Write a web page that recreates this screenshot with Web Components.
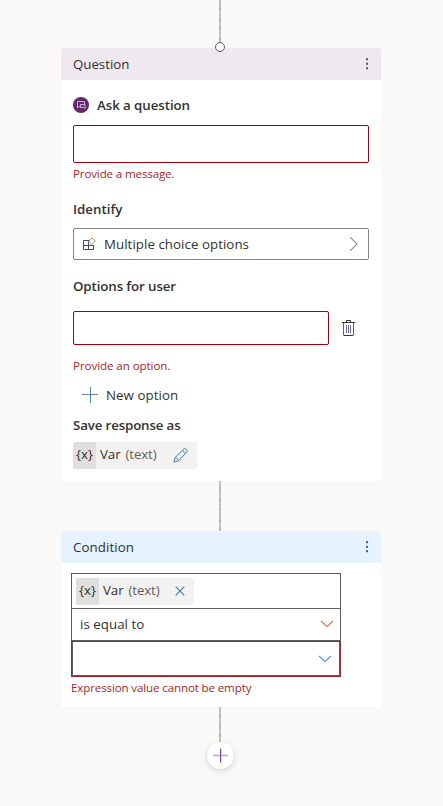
<!DOCTYPE html>
<html lang="en">
<head>
<meta charset="utf-8">
<title>Topic authoring canvas</title>
<style>
html,body{margin:0;height:100%;background:#faf9f8;overflow:hidden}
body{font:13.3px/20px "Open Sans","Noto Sans",sans-serif;color:#323130}
</style>
</head>
<body>
<flow-canvas></flow-canvas>
<script>
const define = (name, html, setup) => customElements.define(name, class extends HTMLElement {
  constructor() {
    super();
    this.attachShadow({mode: 'open'}).innerHTML = html;
  }
  connectedCallback() { if (setup) setup(this); }
});

// A line of text whose tracking is tuned to a given advance width.
define('ui-text', `<style>
  :host{display:block;white-space:pre;height:20px;line-height:20px}
  :host([strong]){font-weight:600}
  :host([error]){color:#a4262c;font-size:11.6px;height:16px;line-height:16px}
  :host([muted]){color:#605e5c}
  span{display:inline-block}
</style><span><slot></slot></span>`, el => {
  const s = el.shadowRoot.querySelector('span');
  const w = +el.getAttribute('fit');
  if (w) s.style.letterSpacing = ((w - s.getBoundingClientRect().width) / el.textContent.length).toFixed(3) + 'px';
});

const icons = {
  more: [4, 14, '<g fill="#5a5654"><rect x="1" y="1.2" width="2" height="2"/><rect x="1" y="5.8" width="2" height="2"/><rect x="1" y="10.2" width="2" height="2"/></g>'],
  ask: [16, 16, '<circle cx="8" cy="8" r="8" fill="#64266c"/><path d="M7.5 9.5H6L4.5 11V4.5h7v3" fill="none" stroke="#d9c0dd" stroke-width=".9"/><path d="M7.5 7.5h4.5v4.2L10.6 10.5H7.5z" fill="#64266c" stroke="#d9c0dd" stroke-width=".9"/>'],
  blocks: [14, 14, '<path d="M6 3.5H1.5v9h10V8M1.5 8.5h10M6.5 3v9.5" fill="none" stroke="#4b4a5c"/><path d="M10 .9l3.3 3.3L10 7.5 6.7 4.2z" fill="#fff" stroke="#b07a52" stroke-width=".9"/>'],
  right: [9, 16, '<path d="M1 1.2L7.6 8 1 14.8" fill="none" stroke="#b97943" stroke-width=".9"/><path d="M1.6 1.2L8.2 8 1.6 14.8" fill="none" stroke="#4688c4" stroke-width=".9"/>'],
  down: [14, 8, '<path d="M1 1l6 5.6L13 1" fill="none" stroke="#c07a48" stroke-width="1.1"/><path d="M7.3 6.6L13.2 1.1" fill="none" stroke="#5c9acb" stroke-width=".4"/>'],
  downBlue: [14, 8, '<path d="M1 1l6 5.6L13 1" fill="none" stroke="#4a91c9" stroke-width="1.1"/><path d="M.8 1.1L6.8 6.7" fill="none" stroke="#c38b60" stroke-width=".4"/>'],
  trash: [13, 17, '<path d="M1.5 3v12.5M11.5 3v12.5" stroke="#53618c"/><path d="M4.5 5v8M6.5 5v8M8.5 5v8" stroke="#6b67a4"/><path d="M0 2.5h13M4.5 2V.5h4V2M2 15.5h9" fill="none" stroke="#323130"/>'],
  plus: [16, 16, '<path d="M0 7.5h16" stroke="#777d96"/><path d="M8.5 0v16" stroke="#4b86bd"/>'],
  pencil: [15, 15, '<path d="M.9 14.1l1.2-4.5L10.6 1.1c2-1.4 4.4 1 3.2 3.1L5.4 12.8zM9.4 2.3l3.3 3.3M2.1 9.6c1.6.1 3 1.5 3.3 3.2" fill="none" stroke="#477b9c"/>'],
  close: [10, 10, '<path d="M.7 .7l8.6 8.6M9.3 .7L.7 9.3" fill="none" stroke="#3d7c9d" stroke-width="1.1"/>'],
  add: [15, 15, '<path d="M0 7.5h15" stroke="#a9b5b8" stroke-width="1.6"/><path d="M7.5 .5v14" stroke="#733a98"/><path d="M8.4 .5v14" stroke="#9dd0e9" stroke-width=".7"/>']
};
define('ui-icon', `<style>:host{display:block;flex:none}svg{display:block}</style><span></span>`, el => {
  const [w, h, art] = icons[el.getAttribute('name')];
  el.shadowRoot.querySelector('span').innerHTML = `<svg width="${w}" height="${h}" viewBox="0 0 ${w} ${h}">${art}</svg>`;
});

define('flow-line', `<style>
  :host{display:block;width:2px;margin-left:219px;
    background:repeating-linear-gradient(#c0bfbe 0 8px,#a9a8a7 8px 9px,#c0bfbe 9px 19px,#a9a8a7 19px 20px)}
</style>`);

define('flow-card', `<style>
  :host{display:flex;flex-direction:column;box-sizing:border-box;width:320px;margin-left:61px;background:#fff;border-radius:2px;overflow:hidden}
  header{display:flex;align-items:center;justify-content:space-between;height:32px;padding:0 12px;box-sizing:border-box;background:var(--tone)}
</style><header><slot name="title"></slot><ui-icon name="more"></ui-icon></header><slot></slot>`);

define('text-box', `<style>
  :host{display:flex;align-items:center;box-sizing:border-box;border:1px solid #a4000c;border-radius:2px;background:#fff}
  :host([picker]){border-color:#858482;padding:0 10px 0 8px}
</style><slot></slot>`);

define('variable-chip', `<style>
  :host{display:flex;align-items:center;height:27px;background:#f3f2f1;border-radius:2px;box-sizing:border-box;overflow:hidden}
  .sym{display:flex;align-items:center;justify-content:center;width:23px;height:27px;background:#e1dfdd;margin-right:4px}
  .type{margin-left:5px}
  ui-text{padding-bottom:var(--lift,2px)}
  .act{margin-left:auto}
</style><div class="sym"><ui-text fit="17">{x}</ui-text></div><ui-text fit="20.5">Var</ui-text><ui-text class="type" muted fit="31">(text)</ui-text><div class="act"><slot></slot></div>`);

define('question-form', `<style>
  :host{display:flex;flex-direction:column;height:401px;padding:0 12px;box-sizing:border-box}
  .row{display:flex;align-items:center}
  .ask{gap:8px;margin-top:15px}
  .message{height:38px;margin-top:10px}
  .picker{height:32px;margin-top:9px}
  .picker ui-text{margin-left:8px;flex:1}
  .option{height:34px;width:256px}
  variable-chip{width:124px;padding-right:9px;margin-top:7px;--lift:3px}
</style>
<div class="row ask"><ui-icon name="ask"></ui-icon><ui-text strong fit="93">Ask a question</ui-text></div>
<text-box class="message"></text-box>
<ui-text error fit="101.3" style="margin-top:3px">Provide a message.</ui-text>
<ui-text strong fit="49.3" style="margin-top:17px">Identify</ui-text>
<text-box picker class="picker"><ui-icon name="blocks"></ui-icon><ui-text fit="145">Multiple choice options</ui-text><ui-icon name="right"></ui-icon></text-box>
<ui-text strong fit="103" style="margin-top:16px">Options for user</ui-text>
<div class="row" style="gap:13px;margin-top:15px"><text-box class="option"></text-box><ui-icon name="trash"></ui-icon></div>
<ui-text error fit="97.3" style="margin-top:13px">Provide an option.</ui-text>
<div class="row" style="gap:8px;margin-top:11px;padding-left:9px"><ui-icon name="plus"></ui-icon><ui-text fit="72.3">New option</ui-text></div>
<ui-text strong fit="107.5" style="margin-top:10px">Save response as</ui-text>
<variable-chip><ui-icon name="pencil"></ui-icon></variable-chip>`);

define('condition-form', `<style>
  :host{display:flex;flex-direction:column;height:144px;padding:10px 0 0 10px;box-sizing:border-box}
  .cell{display:flex;align-items:center;width:270px;box-sizing:border-box;border:1px solid #605e5c}
  .variable{height:36px;padding-left:4px}
  .operator{height:32px;border-top:0;justify-content:space-between;padding:0 6px 1px 8px}
  .value{height:36px;border:0;background:#a4262c;padding:1px}
  .inner{display:flex;align-items:center;justify-content:flex-end;flex:1;align-self:stretch;background:#fff;border:1px solid #605e5c;border-top:0;padding-right:7px}
  variable-chip{width:118px;padding-right:9px}
</style>
<div class="cell variable"><variable-chip><ui-icon name="close"></ui-icon></variable-chip></div>
<div class="cell operator"><ui-text fit="64.3">is equal to</ui-text><ui-icon name="down"></ui-icon></div>
<div class="cell value"><div class="inner"><ui-icon name="downBlue"></ui-icon></div></div>
<ui-text error fit="180.3" style="margin-top:3px">Expression value cannot be empty</ui-text>`);

define('flow-canvas', `<style>
  :host{display:block;width:443px;height:806px;background:#faf9f8;position:relative}
  .port{position:absolute;left:215px;top:42px;width:10px;height:10px;box-sizing:border-box;border:1px solid #605e5c;border-radius:50%;background:#fff}
  .add{display:flex;align-items:center;justify-content:center;width:27px;height:27px;margin-left:207px;border-radius:50%;background:#fff;box-shadow:0 2px 6px #0002,0 0 2px #0001}
</style>
<flow-line style="height:48px"></flow-line>
<flow-card style="--tone:#efe8ef"><ui-text slot="title" fit="56.3">Question</ui-text><question-form></question-form></flow-card>
<flow-line style="height:50px"></flow-line>
<flow-card style="--tone:#e5f2ff"><ui-text slot="title" fit="61">Condition</ui-text><condition-form></condition-form></flow-card>
<flow-line style="height:35px"></flow-line>
<div class="add"><ui-icon name="add"></ui-icon></div>
<div class="port"></div>`);
</script>
</body>
</html>
